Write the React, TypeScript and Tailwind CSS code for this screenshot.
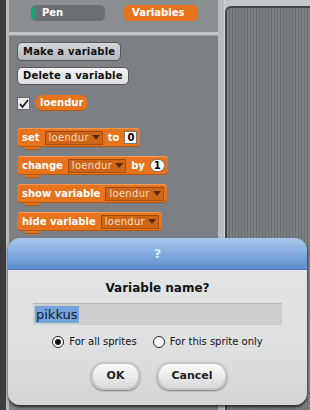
import React from 'react';

const font = { fontFamily: '"DejaVu Sans", Verdana, sans-serif' };

const Slot = ({ label }: { label: string }) => (
  <div className="h-[14px] flex items-center gap-[3px] pl-[3px] pr-[2px] bg-[#cf6517] border border-[#a9500f] border-t-[#9a470c] border-l-[#9a470c]">
    <span className="text-[10px] leading-none text-[#f7dcc6] tracking-[0.3px] font-normal">{label}</span>
    <svg width="8" height="5" viewBox="0 0 8 5">
      <path d="M0 0 L8 0 L4 5 Z" fill="#5a2a08" />
    </svg>
  </div>
);

const Block = ({ children }: { children: React.ReactNode }) => (
  <div className="flex flex-col items-start">
    <div className="h-[19px] flex items-center gap-[5px] pl-[5px] pr-[3px] bg-[#e8731d] rounded-[4px] border-t border-t-[#f39a55] border-b border-b-[#b4570f] text-[10px] font-bold text-white leading-none">
      {children}
    </div>
    <div className="ml-[8px] w-[14px] h-[3px] bg-[#e8731d] rounded-b-[2px] border-b border-b-[#b4570f]" />
  </div>
);

export default function App() {
  return (
    <div className="w-[310px] h-[410px] relative overflow-hidden flex bg-[#3b3b3b]" style={font}>
      <div className="w-[6px] bg-[#3d3d3d]" />
      <div className="w-[3px] bg-[#b6b9bc]" />

      {/* palette column */}
      <div className="w-[209px] flex flex-col">
        <div className="h-[32px] bg-[#8c8f92] flex gap-[19px] pl-[22px] pt-[5px]">
          <div className="w-[74px] h-[16px] rounded-[5px] bg-[#6c6f72] flex items-center overflow-hidden">
            <div className="w-[4px] h-[13px] ml-[1px] rounded-full bg-[#17a176]" />
            <span className="ml-[6px] text-[10px] font-bold text-white leading-none">Pen</span>
          </div>
          <div className="w-[74px] h-[16px] rounded-[5px] bg-[#e8731d] flex items-center">
            <span className="ml-[8px] text-[10px] font-bold text-white leading-none">Variables</span>
          </div>
        </div>
        <div className="h-[4px] bg-[#c4c7ca] border-b border-[#9a9da0]" />
        <div className="flex-1 bg-[#7c7f83] flex flex-col items-start pl-[8px] pt-[6px]">
          <div className="h-[19px] px-[5px] flex items-center rounded-[5px] bg-gradient-to-b from-[#d4d6d8] to-[#b6b8ba] border border-[#55585b] text-[10px] font-bold text-[#111] tracking-[0.2px] leading-none">
            Make a variable
          </div>
          <div className="mt-[6px] h-[18px] px-[5px] flex items-center rounded-[5px] bg-gradient-to-b from-[#f4f4f4] to-[#dedede] border border-[#55585b] text-[10px] font-bold text-[#111] tracking-[0.2px] leading-none">
            Delete a variable
          </div>
          <div className="mt-[10px] flex items-center gap-[5px]">
            <div className="w-[13px] h-[13px] bg-[#e9e9e9] border border-[#6a6a6a] flex items-center justify-center">
              <svg width="10" height="9" viewBox="0 0 10 9">
                <path d="M1 5 L3.5 8 L9 1" stroke="#111" strokeWidth="1.6" fill="none" />
              </svg>
            </div>
            <div className="h-[16px] px-[5px] rounded-full bg-[#e8731d] border-b border-[#b4570f] flex items-center text-[10px] font-bold text-white leading-none">
              loendur
            </div>
          </div>
          <div className="mt-[17px] flex flex-col gap-[6px]">
            <Block>
              <span>set</span>
              <Slot label="loendur" />
              <span>to</span>
              <div className="h-[13px] px-[2px] bg-white border border-[#777] flex items-center text-[10px] font-bold text-black">0</div>
            </Block>
            <Block>
              <span>change</span>
              <Slot label="loendur" />
              <span>by</span>
              <div className="h-[13px] w-[15px] rounded-full bg-white border border-[#777] flex items-center justify-center text-[10px] font-bold text-black">1</div>
            </Block>
            <Block>
              <span>show variable</span>
              <Slot label="loendur" />
            </Block>
            <Block>
              <span>hide variable</span>
              <Slot label="loendur" />
            </Block>
          </div>
        </div>
      </div>

      <div className="w-[7px] bg-[#b8bbbe] border-r border-[#d2d5d8]" />

      {/* scripting area */}
      <div className="flex-1 flex flex-col bg-[#c3c7cb]">
        <div className="h-[6px]" />
        <div className="flex-1 rounded-tl-[6px] border-l-2 border-t-2 border-[#44474a] bg-[repeating-linear-gradient(90deg,#7d8083_0px,#7d8083_2px,#6b6e71_2px,#6b6e71_3px)]" />
      </div>

      {/* dialog */}
      <div className="absolute left-[8px] top-[238px] w-[299px] h-[167px] rounded-[12px] overflow-hidden flex flex-col shadow-[0_2px_3px_rgba(0,0,0,0.7)]">
        <div className="h-[32px] bg-gradient-to-b from-[#a9c9ea] to-[#5e8dd0] flex items-center justify-center border-b border-[#5279b5]">
          <span className="text-[13px] font-bold text-[#dfe9f6]">?</span>
        </div>
        <div className="flex-1 bg-gradient-to-b from-[#e1e3e5] via-[#dfe1e3] to-[#d2d4d6] flex flex-col items-center">
          <div className="mt-[11px] text-[12px] font-bold text-[#111] leading-[15px]">Variable name?</div>
          <div className="mt-[7px] w-[249px] h-[22px] bg-[#cdcfd1] border-t border-[#b5b7b9] flex items-center pl-[2px]">
            <span className="bg-[#76a3d9] text-[#10203a] text-[13px] leading-[17px] px-[1px]">pikkus</span>
          </div>
          <div className="mt-[11px] flex items-center text-[10px] text-[#111] leading-none">
            <div className="w-[12px] h-[12px] rounded-full border border-[#222] bg-white flex items-center justify-center">
              <div className="w-[6px] h-[6px] rounded-full bg-[#111]" />
            </div>
            <span className="ml-[5px]">For all sprites</span>
            <div className="ml-[16px] w-[12px] h-[12px] rounded-full border border-[#222] bg-white" />
            <span className="ml-[5px]">For this sprite only</span>
          </div>
          <div className="mt-[14px] flex gap-[17px] ml-[3px]">
            <div className="w-[49px] h-[28px] rounded-[13px] border-2 border-[#c3c5c7] bg-gradient-to-b from-[#fcfcfc] to-[#d9dadb] shadow-[0_1px_2px_rgba(0,0,0,0.45)] flex items-center justify-center text-[11px] font-bold text-[#222]">OK</div>
            <div className="w-[70px] h-[28px] rounded-[13px] border-2 border-[#c3c5c7] bg-gradient-to-b from-[#fcfcfc] to-[#d9dadb] shadow-[0_1px_2px_rgba(0,0,0,0.45)] flex items-center justify-center text-[11px] font-bold text-[#222]">Cancel</div>
          </div>
        </div>
      </div>
    </div>
  );
}
